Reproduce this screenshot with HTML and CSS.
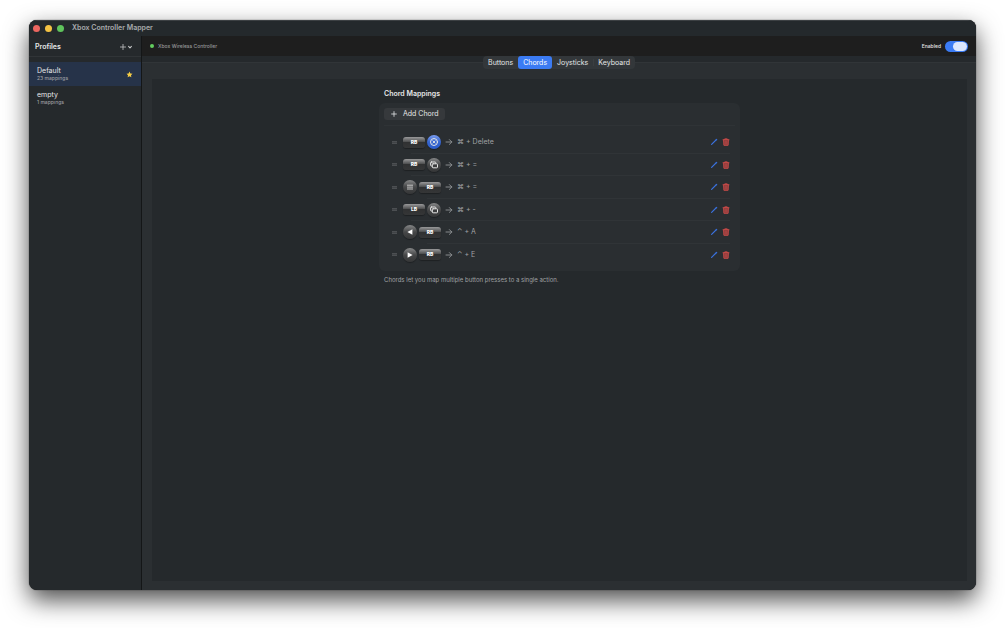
FILE: index.html
```html
<!DOCTYPE html>
<html lang="en">
<head>
  <meta charset="UTF-8" />
  <title>Xbox Controller Mapper</title>
  <link rel="stylesheet" href="styles.css">
</head>
<body>

<!-- shared icons -->
<svg class="sprite" aria-hidden="true">
  <symbol id="i-arrow" viewBox="0 0 8 8"><path d="M1 4h5.8M4.4 1.6 6.8 4 4.4 6.4" /></symbol>
  <symbol id="i-pencil" viewBox="0 0 8 8"><path d="M1.6 6.4 6 2" stroke-width="1.2" /><path d="M6.2 1.8l.5-.5" stroke-width="1.2" /></symbol>
  <symbol id="i-trash" viewBox="0 0 8 8"><path d="M1.6 1.9l.3 5.4h4.2l.3-5.4z" fill="#7e3a3b" /><path d="M.9 1.8h6.2M2.8 1.7V.7h2.4v1M3.2 3v3.2M4.8 3v3.2" stroke-width=".8" /></symbol>
  <symbol id="i-view" viewBox="0 0 14 14"><rect x="3.6" y="4" width="5.2" height="4" rx=".8" /><rect x="5.3" y="5.8" width="5.2" height="4" rx=".8" fill="#3c3d3e" /></symbol>
  <symbol id="i-menu" viewBox="0 0 14 14"><path d="M4.4 5.2h5.2M4.4 7.1h5.2M4.4 9h5.2" stroke-width=".8" /></symbol>
  <symbol id="i-guide" viewBox="0 0 14 14"><circle cx="7" cy="7" r="3.5" /><path d="M5.9 5.9l2.2 2.2M8.1 5.9 5.9 8.1" stroke-width=".9" /></symbol>
  <symbol id="i-left" viewBox="0 0 14 14"><path d="M4.4 7l5-2.7v5.4z" fill="#fff" stroke="none" /></symbol>
  <symbol id="i-right" viewBox="0 0 14 14"><path d="M9.6 7l-5-2.7v5.4z" fill="#fff" stroke="none" /></symbol>
</svg>

<div class="window">
  <header class="titlebar">
    <span class="light red"></span>
    <span class="light yellow"></span>
    <span class="light green"></span>
    <h1>Xbox Controller Mapper</h1>
  </header>

  <div class="body">
    <aside class="sidebar">
      <div class="sidebar-head">
        <h2>Profiles</h2>
        <button class="add-profile" aria-label="Add profile">
          <svg viewBox="0 0 14 8"><path d="M1.4 4h5.2M4 1.4v5.2" /><path d="M9.6 3.4 11 4.8l1.4-1.4" stroke-width="1.1" /></svg>
        </button>
      </div>
      <ul class="profiles">
        <li class="profile selected">
          <div>
            <div class="profile-name">Default</div>
            <div class="profile-count">23 mappings</div>
          </div>
          <svg class="star" viewBox="0 0 10 10"><path d="M5 .8l1.3 2.8 3 .4-2.2 2.1.6 3L5 7.6 2.3 9.1l.6-3L.7 4l3-.4z" /></svg>
        </li>
        <li class="profile">
          <div>
            <div class="profile-name">empty</div>
            <div class="profile-count">1 mappings</div>
          </div>
        </li>
      </ul>
    </aside>

    <main class="main">
      <div class="status">
        <span class="dot"></span>
        <span class="device">Xbox Wireless Controller</span>
        <label class="enabled" for="enabled">Enabled</label>
        <input class="switch" type="checkbox" id="enabled" checked>
      </div>

      <nav class="tabbar">
        <div class="tabs">
          <button class="tab">Buttons</button>
          <button class="tab active">Chords</button>
          <button class="tab">Joysticks</button>
          <button class="tab split">Keyboard</button>
        </div>
      </nav>

      <div class="pane">
        <section class="chords">
          <h3>Chord Mappings</h3>
          <div class="card">
            <button class="add-chord">
              <svg viewBox="0 0 8 8"><path d="M4 1.6v4.8M1.6 4h4.8" /></svg>
              Add Chord
            </button>
            <ul class="list">
              <li class="row">
                <span class="handle"></span>
                <span class="bumper">RB</span>
                <span class="round blue"><svg><use href="#i-guide" /></svg></span>
                <svg class="arrow"><use href="#i-arrow" /></svg>
                <span class="action">⌘ + Delete</span>
                <button class="icon edit" aria-label="Edit"><svg><use href="#i-pencil" /></svg></button>
                <button class="icon remove" aria-label="Delete"><svg><use href="#i-trash" /></svg></button>
              </li>
              <li class="row">
                <span class="handle"></span>
                <span class="bumper">RB</span>
                <span class="round"><svg><use href="#i-view" /></svg></span>
                <svg class="arrow"><use href="#i-arrow" /></svg>
                <span class="action">⌘ + =</span>
                <button class="icon edit" aria-label="Edit"><svg><use href="#i-pencil" /></svg></button>
                <button class="icon remove" aria-label="Delete"><svg><use href="#i-trash" /></svg></button>
              </li>
              <li class="row inset">
                <span class="handle"></span>
                <span class="round"><svg><use href="#i-menu" /></svg></span>
                <span class="bumper">RB</span>
                <svg class="arrow"><use href="#i-arrow" /></svg>
                <span class="action">⌘ + =</span>
                <button class="icon edit" aria-label="Edit"><svg><use href="#i-pencil" /></svg></button>
                <button class="icon remove" aria-label="Delete"><svg><use href="#i-trash" /></svg></button>
              </li>
              <li class="row">
                <span class="handle"></span>
                <span class="bumper">LB</span>
                <span class="round"><svg><use href="#i-view" /></svg></span>
                <svg class="arrow"><use href="#i-arrow" /></svg>
                <span class="action">⌘ + -</span>
                <button class="icon edit" aria-label="Edit"><svg><use href="#i-pencil" /></svg></button>
                <button class="icon remove" aria-label="Delete"><svg><use href="#i-trash" /></svg></button>
              </li>
              <li class="row inset">
                <span class="handle"></span>
                <span class="round"><svg><use href="#i-left" /></svg></span>
                <span class="bumper">RB</span>
                <svg class="arrow"><use href="#i-arrow" /></svg>
                <span class="action">⌃ + A</span>
                <button class="icon edit" aria-label="Edit"><svg><use href="#i-pencil" /></svg></button>
                <button class="icon remove" aria-label="Delete"><svg><use href="#i-trash" /></svg></button>
              </li>
              <li class="row">
                <span class="handle"></span>
                <span class="round"><svg><use href="#i-right" /></svg></span>
                <span class="bumper">RB</span>
                <svg class="arrow"><use href="#i-arrow" /></svg>
                <span class="action">⌃ + E</span>
                <button class="icon edit" aria-label="Edit"><svg><use href="#i-pencil" /></svg></button>
                <button class="icon remove" aria-label="Delete"><svg><use href="#i-trash" /></svg></button>
              </li>
            </ul>
          </div>
          <p class="note">Chords let you map multiple button presses to a single action.</p>
        </section>
      </div>
    </main>
  </div>
</div>

</body>
</html>
```
FILE: styles.css
```css
* {
  box-sizing: border-box;
  margin: 0;
  padding: 0;
}

body {
  display: flex;
  min-height: 100vh;
  padding: 20px 29px 38px;
  background: #fff;
  color: #e6e7e8;
  font: 7px/10px Inter, "Liberation Sans", "DejaVu Sans", sans-serif;
}

ul {
  list-style: none;
}

button {
  border: none;
  background: none;
  color: inherit;
  font: inherit;
}

svg {
  display: block;
  fill: none;
  stroke: currentColor;
  stroke-linecap: round;
  stroke-linejoin: round;
}

.sprite {
  display: none;
}

h1, h2, h3 {
  font-size: 7px;
  font-weight: 600;
  line-height: 12px;
}

.window {
  flex: 1;
  display: flex;
  flex-direction: column;
  overflow: hidden;
  border-radius: 8px;
  background: #25292c;
  box-shadow: 0 0 1px #000, 0 10px 24px rgba(0, 0, 0, 0.7);
}

.titlebar {
  display: flex;
  align-items: center;
  gap: 5px;
  height: 16px;
  padding-left: 4px;
  background: #24292c;
  box-shadow: inset 0 1px #3c4043;
}

.titlebar h1 {
  margin-left: 3px;
  color: #a9abad;
}

.light {
  width: 7px;
  height: 7px;
  border-radius: 50%;
}

.red { background: #ec6660; }
.yellow { background: #f4c344; }
.green { background: #5fc35c; }

.body {
  flex: 1;
  display: flex;
}

/* sidebar */
.sidebar {
  width: 113px;
  border-right: 1px solid #141617;
}

.sidebar-head {
  display: flex;
  align-items: center;
  justify-content: space-between;
  height: 21px;
  padding: 1px 8px 0 6px;
  border-bottom: 1px solid #303437;
}

.add-profile svg {
  width: 14px;
  height: 8px;
  stroke: #c4c5c6;
  stroke-width: 0.8;
}

.profiles {
  padding-top: 5px;
}

.profile {
  display: flex;
  align-items: center;
  justify-content: space-between;
  height: 24px;
  padding: 0 8px;
}

.profile.selected {
  background: #263349;
}

.profile-name {
  line-height: 9px;
}

.profile-count {
  color: #9c9ea1;
  font-size: 5px;
  font-weight: 500;
  line-height: 7px;
}

.star {
  width: 7px;
  height: 7px;
  fill: #f6cd45;
  stroke: none;
}

/* right side */
.main {
  flex: 1;
  display: flex;
  flex-direction: column;
  background: #2b2f32;
}

.status {
  display: flex;
  align-items: center;
  height: 20px;
  padding: 0 8px;
  background: #1e1e1e;
  font-size: 5px;
  font-weight: 500;
}

.dot {
  width: 4px;
  height: 4px;
  margin-right: 4px;
  border-radius: 50%;
  background: #63ce5f;
}

.device {
  flex: 1;
  color: #98999a;
}

.enabled {
  margin-right: 4px;
}

.switch {
  appearance: none;
  display: flex;
  justify-content: flex-end;
  width: 23px;
  height: 11px;
  padding: 1px;
  border-radius: 6px;
  background: #3b7bf3;
}

.switch::before {
  content: "";
  width: 14px;
  height: 9px;
  border-radius: 5px;
  background: #dbe6fd;
}

.tabbar {
  display: flex;
  justify-content: center;
  align-items: flex-start;
  height: 23px;
  background: linear-gradient(#25292c 6px, #313538 6px, #313538 7px, #2b2f32 7px);
}

.tabs {
  display: flex;
  border-radius: 4px;
  background: #33373a;
}

.tab {
  height: 13px;
  padding: 0 5px;
  line-height: 14px;
}

.tab.active {
  border-radius: 3px;
  background: #3b7bf3;
  color: #fff;
}

.tab.split {
  background: linear-gradient(#3a3e41, #3a3e41) no-repeat left center / 1px 7px;
}

.pane {
  flex: 1;
  margin: 0 9px 9px 10px;
  padding-top: 9px;
  background: #25292c;
}

.chords {
  width: 361px;
  max-width: 100%;
  margin: 0 auto;
}

.chords h3 {
  margin: 0 5px 3px;
}

.card {
  padding: 5px;
  border-radius: 6px;
  background: #2a2e31;
}

.add-chord {
  display: flex;
  align-items: center;
  gap: 5px;
  height: 12px;
  padding: 0 6px;
  border-radius: 3px;
  background: #36393c;
}

.add-chord svg {
  width: 8px;
  height: 8px;
  stroke-width: 0.8;
}

.list {
  display: grid;
  grid-auto-rows: 1fr;
  min-height: 141px;
  margin-top: 5px;
  padding-top: 5px;
  border-top: 1px solid #2f3336;
}

.row {
  display: flex;
  align-items: center;
  gap: 2px;
  padding: 0 5px 0 8px;
  color: #a0a2a4;
}

.row:not(:last-child) {
  background: linear-gradient(#303437, #303437) no-repeat right 5px bottom / calc(100% - 32px) 1px;
}

.row.inset:not(:last-child) {
  background-size: calc(100% - 48px) 1px;
}

.handle {
  width: 5px;
  height: 3px;
  margin-right: 4px;
  border: solid #4c4f52;
  border-width: 1px 0;
  background: #404346;
}

.bumper {
  width: 22px;
  height: 11px;
  border-radius: 3px;
  background: linear-gradient(#99999a, #4c4d4e 45%, #303132 50%, #353637);
  box-shadow: 0 1px 1px rgba(0, 0, 0, 0.3);
  color: #fff;
  font-size: 5px;
  font-weight: 800;
  line-height: 11px;
  text-align: center;
}

.round {
  width: 14px;
  height: 14px;
  border-radius: 50%;
  background: linear-gradient(#868788, #464748 50%, #353637);
  box-shadow: 0 1px 1px rgba(0, 0, 0, 0.3);
  color: #e4e4e4;
}

.round.blue {
  background: linear-gradient(#7b9df0, #3565cf 50%, #2c5ccb);
}

.round svg {
  width: 14px;
  height: 14px;
}

.arrow {
  width: 8px;
  height: 8px;
  margin: 0 2px;
  stroke-width: 0.8;
}

.action {
  flex: 1;
  font-family: Inter, "DejaVu Sans", sans-serif;
  line-height: 12px;
}

.icon svg {
  width: 8px;
  height: 8px;
}

.edit {
  margin-right: 2px;
  color: #3a70dc;
}

.remove {
  color: #c24a48;
}

.note {
  margin: 4px 5px 0;
  color: #a0a2a4;
  font-size: 6px;
}
```
